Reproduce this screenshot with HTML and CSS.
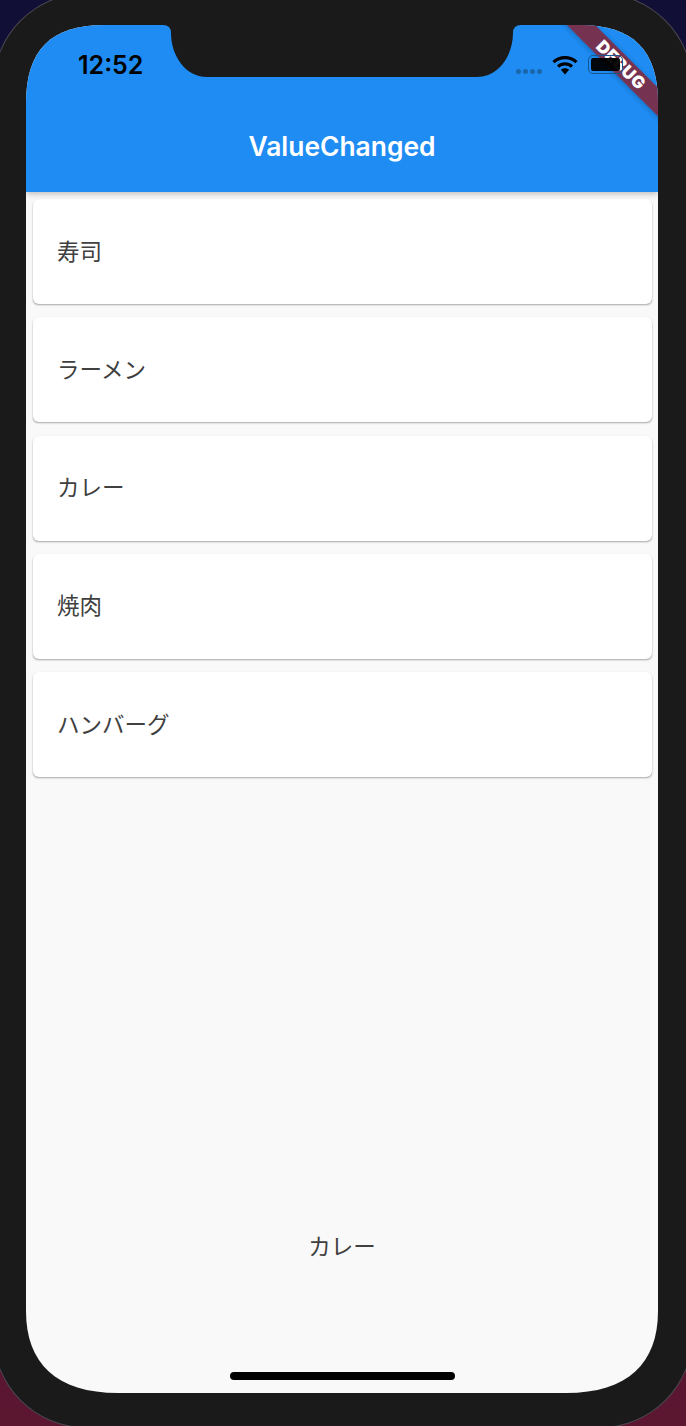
FILE: index.html
```html
<!DOCTYPE html>
<html lang="ja">
<head>
<meta charset="utf-8">
<title>ValueChanged</title>
<link rel="stylesheet" href="styles.css">
</head>
<body>
<div class="frame">
  <div class="screen">
    <header class="appbar">
      <div class="status">
        <span class="time">12:52</span>
        <span class="dots"><i></i><i></i><i></i><i></i></span>
        <svg class="wifi" width="26" height="20" viewBox="0 0 26 20">
          <path class="wifi-arc" d="M1.5 7.2C7.9 1.2 18.1 1.2 24.5 7.2"/>
          <path class="wifi-arc" d="M6 11.6C9.9 8 16.1 8 20 11.6"/>
          <path class="wifi-fill" d="M8.9 14.8C11.2 12.8 14.8 12.8 17.100 14.800L13 19.500Z"/>
        </svg>
        <span class="battery"><i></i></span>
      </div>
      <h1 class="title">ValueChanged</h1>
    </header>
    <main class="list">
      <div class="card">寿司</div>
      <div class="card">ラーメン</div>
      <div class="card">カレー</div>
      <div class="card">焼肉</div>
      <div class="card">ハンバーグ</div>
    </main>
    <div class="result">カレー</div>
    <div class="home-bar"></div>
    <svg class="notch" width="358" height="52" viewBox="0 0 358 52">
      <path d="M0 0Q8 0 8 8C8 30 22 52 44 52H314C336 52 350 30 350 8Q350 0 358 0Z"/>
    </svg>
    <div class="banner">DEBUG</div>
  </div>
</div>
</body>
</html>
```
FILE: styles.css
```css
html, body {
  margin: 0;
  padding: 0;
  height: 1426px;
  overflow: hidden;
}
body {
  background: linear-gradient(180deg, #110f36 0%, #1d1440 40%, #4a1436 75%, #5c1630 100%);
  font-family: "Noto Sans CJK JP", "Noto Sans", sans-serif;
}
.frame {
  box-sizing: border-box;
  width: 698px;
  height: 1433px;
  margin: -6px;
  padding: 31px 34px 0 32px;
  background: #1a1a1a;
  border-radius: 92px;
  box-shadow: 0 0 0 1px #4a4650;
}
.screen {
  position: relative;
  width: 632px;
  height: 1368px;
  display: flex;
  flex-direction: column;
  background: #f9f9f9;
  clip-path: path("M0 78C0 25 25 0 78 0H554C607 0 632 25 632 78V1286C632 1338 602 1368 540 1368H92C30 1368 0 1338 0 1286Z");
}
.appbar {
  height: 167px;
  flex: none;
  display: flex;
  flex-direction: column;
  background: #1e8cf2;
  box-shadow: 0 2px 6px rgba(0, 0, 0, 0.24);
  position: relative;
}
.status {
  box-sizing: border-box;
  height: 77px;
  padding: 3px 35px 0 52px;
  display: flex;
  align-items: center;
  gap: 10px;
}
.time {
  font-family: Inter, sans-serif;
  font-weight: 600;
  font-size: 25px;
  color: #000;
  margin-right: auto;
}
.dots {
  display: flex;
  gap: 2px;
  margin-top: 12px;
}
.dots i {
  width: 5px;
  height: 5px;
  border-radius: 50%;
  background: #1a66ab;
}
.wifi {
  display: block;
  margin-top: -1px;
}
.wifi-arc {
  fill: none;
  stroke: #000;
  stroke-width: 3.2px;
}
.wifi-fill {
  fill: #000;
}
.battery {
  position: relative;
  z-index: 3;
  box-sizing: border-box;
  width: 35px;
  height: 19px;
  padding: 2px;
  border: 1px solid #17568f;
  border-radius: 5px;
  margin-top: -1px;
}
.battery i {
  display: block;
  height: 100%;
  background: rgba(0, 0, 0, 0.95);
  border-radius: 2px;
}
.title {
  margin: 0;
  padding-bottom: 2px;
  flex: 1;
  display: flex;
  align-items: center;
  justify-content: center;
  font-family: Inter, sans-serif;
  font-weight: 600;
  font-size: 26.4px;
  color: #fff;
}
.list {
  padding: 7px 6px 0 7px;
  display: grid;
  grid-auto-rows: 105px;
  gap: 13.33px;
}
.card {
  display: flex;
  align-items: center;
  padding: 0 0 4px 24px;
  background: #fff;
  border-radius: 6px;
  box-shadow: 0 1.5px 2px -0.5px rgba(0, 0, 0, 0.32), 0 0 2px rgba(0, 0, 0, 0.06);
  font-size: 22.5px;
  color: #404040;
}
.result {
  margin-top: auto;
  height: 292px;
  padding-bottom: 2px;
  display: flex;
  align-items: center;
  justify-content: center;
  font-size: 22.5px;
  color: #404040;
}
.home-bar {
  position: absolute;
  left: 204px;
  bottom: 13px;
  width: 225px;
  height: 8px;
  border-radius: 4px;
  background: #000;
}
.notch {
  position: absolute;
  top: 0;
  left: 137px;
  z-index: 2;
  fill: #1a1a1a;
}
.banner {
  position: absolute;
  z-index: 2;
  top: 30px;
  left: 525px;
  width: 140px;
  height: 20px;
  line-height: 20px;
  text-align: center;
  transform: rotate(45deg);
  background: rgba(122, 46, 72, 0.95);
  box-shadow: 0 1px 5px rgba(0, 0, 0, 0.25);
  font-family: Inter, sans-serif;
  font-weight: 900;
  font-size: 17px;
  letter-spacing: 0.5px;
  color: #fff;
}
```
